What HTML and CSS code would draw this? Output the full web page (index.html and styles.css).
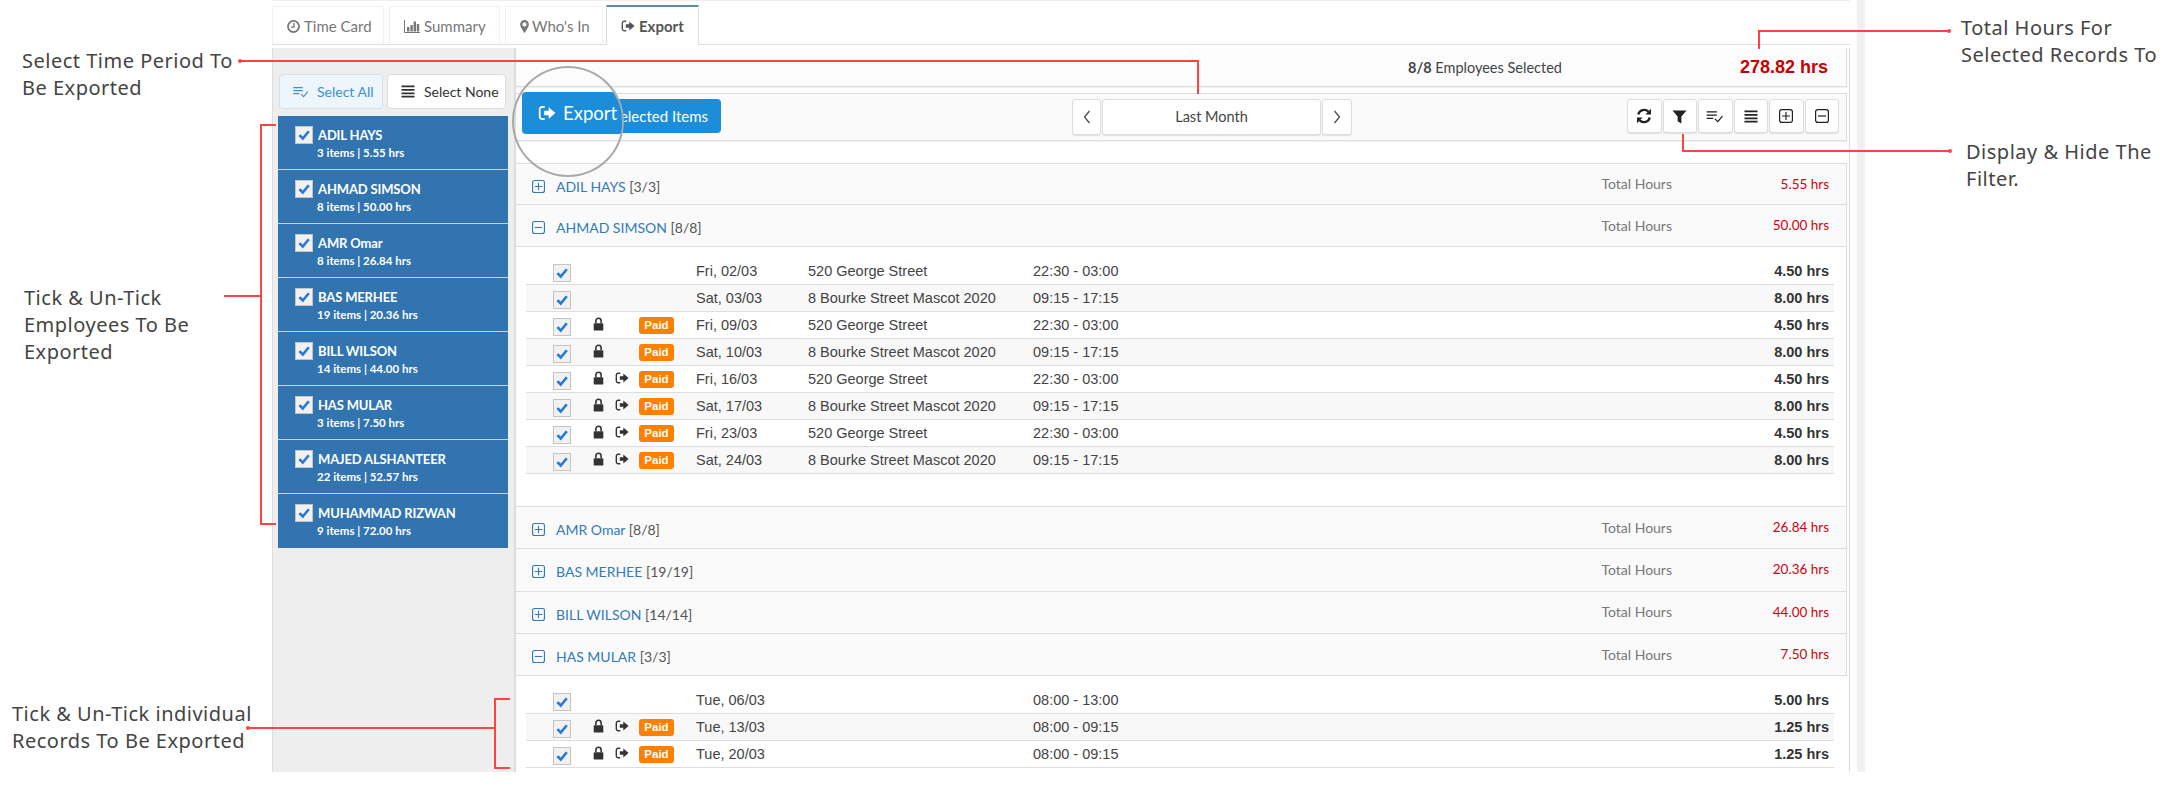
FILE: index.html
```html
<!DOCTYPE html>
<html lang="en">

<head>
    <meta charset="UTF-8">
    <title>Export</title>
    <link rel="stylesheet" href="styles.css">
</head>

<body>

    <svg class="defs" width="0" height="0">
        <symbol id="i-clock" viewBox="0 0 16 16">
            <circle cx="8" cy="8" r="6.8" fill="none" stroke="currentColor" stroke-width="2.200"/>
            <path d="M8.500 3.800v5H5" fill="none" stroke="currentColor" stroke-width="1.700"/>
        </symbol>
        <symbol id="i-chart" viewBox="0 0 16 13" preserveAspectRatio="none">
            <path d="M.5 0v12.500H16" fill="none" stroke="currentColor"/>
            <path d="M3 7h2.400v4.500H3zM6.400 5h2.400v6.500H6.400zM9.600 1.500h2.400v10H9.600zM12.800 4h2.400v7.500h-2.400z" fill="currentColor"/>
        </symbol>
        <symbol id="i-pin" viewBox="2.500 0 11 16">
            <path d="M8 0a5.400 5.400 0 0 0-5.400 5.400C2.600 8.600 8 16 8 16s5.400-7.400 5.400-10.600A5.400 5.400 0 0 0 8 0zm0 8a2.600 2.600 0 1 1 0-5.200A2.600 2.600 0 0 1 8 8z" fill="currentColor"/>
        </symbol>
        <symbol id="i-export" viewBox="0 0 16 16">
            <path d="M6 2.500H3.800A2.300 2.300 0 0 0 1.500 4.800v6.400a2.300 2.300 0 0 0 2.300 2.300H6" fill="none" stroke="currentColor" stroke-width="1.600"/>
            <path d="M5.500 6H9.500V2.800L15.500 8l-6 5.200V10H5.500z" fill="currentColor"/>
        </symbol>
        <symbol id="i-lock" viewBox="0 0 12 16">
            <path d="M3 7V4.500a3 3 0 0 1 6 0V7" fill="none" stroke="currentColor" stroke-width="1.800"/>
            <rect x=".5" y="7" width="11" height="8.500" rx="1" fill="currentColor"/>
        </symbol>
        <symbol id="i-refresh" viewBox="0 0 16 16">
            <path d="M2.300 6.600A6 6 0 0 1 12.400 3.600" fill="none" stroke="currentColor" stroke-width="2.300"/>
            <path d="M15 .8v5.600H9.400z" fill="currentColor"/>
            <path d="M13.700 9.400A6 6 0 0 1 3.600 12.400" fill="none" stroke="currentColor" stroke-width="2.300"/>
            <path d="M1 15.200V9.600h5.600z" fill="currentColor"/>
        </symbol>
        <symbol id="i-filter" viewBox="0 0 16 16">
            <path d="M.5 1.500h15L10 8v7.500L6 13V8z" fill="currentColor"/>
        </symbol>
        <symbol id="i-listcheck" viewBox="0 0 18 14">
            <path d="M0 2h11M0 5.500h11M0 9h7" fill="none" stroke="currentColor" stroke-width="1.500"/>
            <path d="M9 9.500l3 3 5-6" fill="none" stroke="currentColor" stroke-width="1.300"/>
        </symbol>
        <symbol id="i-lines" viewBox="0 0 14 14">
            <path d="M0 1.500h14M0 5.200h14M0 8.900h14M0 12.600h14" fill="none" stroke="currentColor" stroke-width="1.900"/>
        </symbol>
        <symbol id="i-plus" viewBox="0 0 14 14">
            <rect x=".6" y=".6" width="12.800" height="12.800" rx="2.200" fill="none" stroke="currentColor" stroke-width="1.200"/>
            <path d="M7 3v8M3 7h8" fill="none" stroke="currentColor" stroke-width="1.200"/>
        </symbol>
        <symbol id="i-minus" viewBox="0 0 14 14">
            <rect x=".6" y=".6" width="12.800" height="12.800" rx="2.200" fill="none" stroke="currentColor" stroke-width="1.200"/>
            <path d="M3 7h8" fill="none" stroke="currentColor" stroke-width="1.200"/>
        </symbol>
        <symbol id="i-tick" viewBox="0 0 18 18">
            <path d="M3.800 9.200l3.800 3.800 6.800-8.200" fill="none" stroke="currentColor" stroke-width="3"/>
        </symbol>
        <symbol id="i-left" viewBox="0 0 8 14">
            <path d="M6.500 1L1.500 7l5 6" fill="none" stroke="currentColor" stroke-width="1.200"/>
        </symbol>
        <symbol id="i-right" viewBox="0 0 8 14">
            <path d="M1.500 1l5 6-5 6" fill="none" stroke="currentColor" stroke-width="1.200"/>
        </symbol>
    </svg>

    <div class="shell">
        <div class="app">

            <ul class="tabs">
                <li class="tab tab-time"><svg class="ico"><use href="#i-clock"/></svg> Time Card</li>
                <li class="tab tab-summary"><svg class="ico ico-chart"><use href="#i-chart"/></svg> Summary</li>
                <li class="tab tab-who"><svg class="ico ico-pin"><use href="#i-pin"/></svg> Who's In</li>
                <li class="tab tab-export active"><svg class="ico ico-out"><use href="#i-export"/></svg> Export</li>
            </ul>

            <div class="content">

                <div class="side">
                    <div class="side-btns">
                        <button class="btn btn-all"><svg class="ico-list"><use href="#i-listcheck"/></svg> Select All</button>
                        <button class="btn btn-none"><svg class="ico-lines"><use href="#i-lines"/></svg> Select None</button>
                    </div>
                    <div class="emp-list">
                        <div class="emp"><span class="box"><svg><use href="#i-tick"/></svg></span><b class="emp-name">ADIL HAYS</b><span class="emp-sub">3 items | 5.55 hrs</span></div>
                        <div class="emp"><span class="box"><svg><use href="#i-tick"/></svg></span><b class="emp-name">AHMAD SIMSON</b><span class="emp-sub">8 items | 50.00 hrs</span></div>
                        <div class="emp"><span class="box"><svg><use href="#i-tick"/></svg></span><b class="emp-name">AMR Omar</b><span class="emp-sub">8 items | 26.84 hrs</span></div>
                        <div class="emp"><span class="box"><svg><use href="#i-tick"/></svg></span><b class="emp-name">BAS MERHEE</b><span class="emp-sub">19 items | 20.36 hrs</span></div>
                        <div class="emp"><span class="box"><svg><use href="#i-tick"/></svg></span><b class="emp-name">BILL WILSON</b><span class="emp-sub">14 items | 44.00 hrs</span></div>
                        <div class="emp"><span class="box"><svg><use href="#i-tick"/></svg></span><b class="emp-name">HAS MULAR</b><span class="emp-sub">3 items | 7.50 hrs</span></div>
                        <div class="emp"><span class="box"><svg><use href="#i-tick"/></svg></span><b class="emp-name">MAJED ALSHANTEER</b><span class="emp-sub">22 items | 52.57 hrs</span></div>
                        <div class="emp"><span class="box"><svg><use href="#i-tick"/></svg></span><b class="emp-name">MUHAMMAD RIZWAN</b><span class="emp-sub">9 items | 72.00 hrs</span></div>
                    </div>
                </div>

                <div class="main">

                    <div class="summary">
                        <span class="sum-count"><b>8/8</b> Employees Selected</span>
                        <span class="sum-total">278.82 hrs</span>
                    </div>

                    <div class="toolbar">
                        <button class="export-btn">elected Items</button>
                        <div class="pager">
                            <button class="pg pg-prev"><svg><use href="#i-left"/></svg></button>
                            <button class="pg pg-date">Last Month</button>
                            <button class="pg pg-next"><svg><use href="#i-right"/></svg></button>
                        </div>
                        <div class="tools">
                            <button class="tool"><svg class="t-refresh"><use href="#i-refresh"/></svg></button>
                            <button class="tool"><svg class="t-filter"><use href="#i-filter"/></svg></button>
                            <button class="tool"><svg class="t-list"><use href="#i-listcheck"/></svg></button>
                            <button class="tool"><svg class="t-lines"><use href="#i-lines"/></svg></button>
                            <button class="tool"><svg class="t-sq"><use href="#i-plus"/></svg></button>
                            <button class="tool"><svg class="t-sq"><use href="#i-minus"/></svg></button>
                        </div>
                    </div>

                    <div class="groups">
                        <div class="group-head first">
                            <svg class="sq"><use href="#i-plus"/></svg>
                            <span class="g-name"><a>ADIL HAYS</a> [3/3]</span>
                            <span class="g-label">Total Hours</span>
                            <span class="g-hours">5.55 hrs</span>
                        </div>
                        <div class="group-head">
                            <svg class="sq"><use href="#i-minus"/></svg>
                            <span class="g-name"><a>AHMAD SIMSON</a> [8/8]</span>
                            <span class="g-label">Total Hours</span>
                            <span class="g-hours">50.00 hrs</span>
                        </div>
                        <div class="rows rows-ruled">
                            <div class="row"><span class="box"><svg><use href="#i-tick"/></svg></span><span></span><span></span><span></span><span>Fri, 02/03</span><span>520 George Street</span><span>22:30 - 03:00</span><b>4.50 hrs</b></div>
                            <div class="row"><span class="box"><svg><use href="#i-tick"/></svg></span><span></span><span></span><span></span><span>Sat, 03/03</span><span>8 Bourke Street Mascot 2020</span><span>09:15 - 17:15</span><b>8.00 hrs</b></div>
                            <div class="row"><span class="box"><svg><use href="#i-tick"/></svg></span><svg class="lock"><use href="#i-lock"/></svg><span></span><span class="paid">Paid</span><span>Fri, 09/03</span><span>520 George Street</span><span>22:30 - 03:00</span><b>4.50 hrs</b></div>
                            <div class="row"><span class="box"><svg><use href="#i-tick"/></svg></span><svg class="lock"><use href="#i-lock"/></svg><span></span><span class="paid">Paid</span><span>Sat, 10/03</span><span>8 Bourke Street Mascot 2020</span><span>09:15 - 17:15</span><b>8.00 hrs</b></div>
                            <div class="row"><span class="box"><svg><use href="#i-tick"/></svg></span><svg class="lock"><use href="#i-lock"/></svg><svg class="out"><use href="#i-export"/></svg><span class="paid">Paid</span><span>Fri, 16/03</span><span>520 George Street</span><span>22:30 - 03:00</span><b>4.50 hrs</b></div>
                            <div class="row"><span class="box"><svg><use href="#i-tick"/></svg></span><svg class="lock"><use href="#i-lock"/></svg><svg class="out"><use href="#i-export"/></svg><span class="paid">Paid</span><span>Sat, 17/03</span><span>8 Bourke Street Mascot 2020</span><span>09:15 - 17:15</span><b>8.00 hrs</b></div>
                            <div class="row"><span class="box"><svg><use href="#i-tick"/></svg></span><svg class="lock"><use href="#i-lock"/></svg><svg class="out"><use href="#i-export"/></svg><span class="paid">Paid</span><span>Fri, 23/03</span><span>520 George Street</span><span>22:30 - 03:00</span><b>4.50 hrs</b></div>
                            <div class="row"><span class="box"><svg><use href="#i-tick"/></svg></span><svg class="lock"><use href="#i-lock"/></svg><svg class="out"><use href="#i-export"/></svg><span class="paid">Paid</span><span>Sat, 24/03</span><span>8 Bourke Street Mascot 2020</span><span>09:15 - 17:15</span><b>8.00 hrs</b></div>
                        </div>
                        <div class="group-head">
                            <svg class="sq"><use href="#i-plus"/></svg>
                            <span class="g-name"><a>AMR Omar</a> [8/8]</span>
                            <span class="g-label">Total Hours</span>
                            <span class="g-hours">26.84 hrs</span>
                        </div>
                        <div class="group-head">
                            <svg class="sq"><use href="#i-plus"/></svg>
                            <span class="g-name"><a>BAS MERHEE</a> [19/19]</span>
                            <span class="g-label">Total Hours</span>
                            <span class="g-hours">20.36 hrs</span>
                        </div>
                        <div class="group-head">
                            <svg class="sq"><use href="#i-plus"/></svg>
                            <span class="g-name"><a>BILL WILSON</a> [14/14]</span>
                            <span class="g-label">Total Hours</span>
                            <span class="g-hours">44.00 hrs</span>
                        </div>
                        <div class="group-head">
                            <svg class="sq"><use href="#i-minus"/></svg>
                            <span class="g-name"><a>HAS MULAR</a> [3/3]</span>
                            <span class="g-label">Total Hours</span>
                            <span class="g-hours">7.50 hrs</span>
                        </div>
                        <div class="rows">
                            <div class="row"><span class="box"><svg><use href="#i-tick"/></svg></span><span></span><span></span><span></span><span>Tue, 06/03</span><span></span><span>08:00 - 13:00</span><b>5.00 hrs</b></div>
                            <div class="row"><span class="box"><svg><use href="#i-tick"/></svg></span><svg class="lock"><use href="#i-lock"/></svg><svg class="out"><use href="#i-export"/></svg><span class="paid">Paid</span><span>Tue, 13/03</span><span></span><span>08:00 - 09:15</span><b>1.25 hrs</b></div>
                            <div class="row"><span class="box"><svg><use href="#i-tick"/></svg></span><svg class="lock"><use href="#i-lock"/></svg><svg class="out"><use href="#i-export"/></svg><span class="paid">Paid</span><span>Tue, 20/03</span><span></span><span>08:00 - 09:15</span><b>1.25 hrs</b></div>
                        </div>
                    </div>

                </div>
            </div>
        </div>
        <div class="track"></div>
    </div>

    <!-- magnified export button -->
    <div class="lens">
        <div class="lens-btn"><svg class="ico"><use href="#i-export"/></svg> Export</div>
    </div>

    <!-- red callouts -->
    <svg class="callouts" width="2173" height="807">
        <g fill="none" stroke="#ff4343" stroke-width="2">
            <path d="M240 61H1198V94"/>
            <path d="M276 125H261V524H276M224 296H261"/>
            <path d="M248 728H495M510 699H495V768H510"/>
            <path d="M1949 31H1759V49"/>
            <path d="M1950 151H1683V134"/>
        </g>
        <g fill="#ff4343">
            <circle cx="240" cy="61" r="2"/>
            <circle cx="248" cy="728" r="2"/>
            <circle cx="1949" cy="31" r="2"/>
            <circle cx="1950" cy="151" r="2"/>
        </g>
    </svg>

    <div class="note note-period">Select Time Period To<br>Be Exported</div>
    <div class="note note-tick">Tick &amp; Un-Tick<br>Employees To Be<br>Exported</div>
    <div class="note note-records">Tick &amp; Un-Tick individual<br>Records To Be Exported</div>
    <div class="note note-total">Total Hours For<br>Selected Records To</div>
    <div class="note note-filter">Display &amp; Hide The<br>Filter.</div>

</body>

</html>
```

FILE: styles.css
```css
* {
    box-sizing: border-box;
}

body {
    margin: 0;
    width: 2173px;
    height: 807px;
    overflow: hidden;
    position: relative;
    background: white;
    font-family: Lato, "Liberation Sans", sans-serif;
    font-size: 14px;
    color: #333;
}

button {
    font-family: inherit;
    margin: 0;
}

.defs {
    position: absolute;
}

.shell {
    display: flex;
    margin-left: 272px;
    height: 772px;
    overflow: hidden;
}

.app {
    width: 1578px;
    border-top: 1px solid #eee;
    display: flex;
    flex-direction: column;
}

.track {
    width: 8px;
    margin-left: 7px;
    background: #f1f1f1;
}

/* tabs */

.tabs {
    display: flex;
    height: 44px;
    margin: 0;
    padding: 5px 0 0 0;
    list-style: none;
    border-bottom: 1px solid #ddd;
    flex-shrink: 0;
}

.tab {
    display: flex;
    align-items: center;
    gap: 4px;
    height: 39px;
    padding-left: 14px;
    font-size: 15px;
    color: #777;
    border: 1px solid #f0f0f0;
    border-bottom: none;
}

.tab .ico {
    width: 13px;
    height: 13px;
}

.tab .ico-chart {
    width: 16px;
}

.tab .ico-pin {
    width: 9px;
    margin-right: -1px;
}

.tab .ico-out {
    width: 14px;
    height: 14px;
}

.tab-time {
    width: 112px;
    margin-right: 5px;
}

.tab-summary {
    width: 111px;
    margin-right: 5px;
}

.tab-who {
    width: 98px;
    margin-right: 3px;
}

.tab-export {
    width: 93px;
    height: 40px;
    margin-top: -1px;
    background: white;
    color: #555;
    font-weight: bold;
    border: 1px solid #ddd;
    border-top: 2px solid #5b8ea8;
    border-bottom: none;
}

.content {
    display: flex;
    flex: 1;
    min-height: 0;
    padding-top: 3px;
}

/* left list */

.side {
    width: 242px;
    background: #eee;
    border-left: 1px solid #ddd;
    padding-top: 26px;
    flex-shrink: 0;
}

.side-btns {
    display: flex;
    gap: 4px;
    margin-left: 6px;
}

.btn {
    display: flex;
    align-items: center;
    height: 35px;
    font-size: 14px;
    border-radius: 4px;
    padding: 0;
}

.btn-all {
    width: 104px;
    padding-left: 12px;
    gap: 7px;
    background: #eef6fc;
    color: #3b8fd8;
    border: 1px solid #d3e1ec;
}

.btn-none {
    width: 119px;
    padding-left: 13px;
    gap: 9px;
    background: white;
    color: #333;
    border: 1px solid #ddd;
}

.ico-list {
    width: 18px;
    height: 12px;
}

.ico-lines {
    width: 14px;
    height: 13px;
}

.emp-list {
    width: 230px;
    margin: 7px 0 0 5px;
}

.emp {
    display: grid;
    grid-template-columns: 18px auto;
    column-gap: 5px;
    grid-auto-rows: 18px;
    height: 54px;
    padding: 10px 0 0 17px;
    background: #3174b0;
    color: white;
    border-bottom: 1px solid #c4d3e0;
}

.emp:last-child {
    border-bottom: none;
}

.emp-name {
    font-size: 13px;
    line-height: 18px;
    letter-spacing: -0.15px;
}

.emp-sub {
    grid-column: 2;
    margin-left: -1px;
    font-size: 11.5px;
    font-weight: bold;
    line-height: 18px;
}

.box {
    display: block;
    width: 18px;
    height: 18px;
    background: #f1f1f1;
    border: 1px solid #c4c4c4;
    color: #2a7ad5;
}

.box svg {
    display: block;
    width: 16px;
    height: 16px;
}

/* right part */

.main {
    width: 1336px;
    border-left: 2px solid #ddd;
    border-right: 1px solid #ddd;
    padding-right: 2px;
    flex-shrink: 0;
}

.summary {
    display: flex;
    align-items: center;
    height: 39px;
    padding-right: 18px;
    background: #fcfcfc;
    border-bottom: 1px solid #ddd;
    border-right: 1px solid #ddd;
    box-shadow: 0 1px 1px rgba(0, 0, 0, 0.05);
}

.sum-count {
    margin-left: 892px;
    font-size: 14.5px;
    color: #444;
}

.sum-total {
    margin-left: auto;
    font-family: "Liberation Sans", sans-serif;
    font-size: 18px;
    font-weight: bold;
    color: #c80000;
}

.toolbar {
    display: flex;
    align-items: flex-start;
    height: 48px;
    margin-top: 6px;
    padding: 5px 7px 0 7px;
    background: #fafafa;
    border-top: 1px solid #ddd;
    border-bottom: 1px solid #ddd;
    border-right: 1px solid #ddd;
    box-shadow: 0 1px 1px rgba(0, 0, 0, 0.05);
}

.export-btn {
    display: flex;
    align-items: center;
    justify-content: flex-end;
    width: 198px;
    height: 34px;
    padding: 0 13px 0 0;
    background: #1b8dd9;
    color: white;
    border: none;
    border-radius: 4px;
    font-size: 15px;
}

.pager {
    display: flex;
    gap: 1px;
    margin-left: 351px;
}

.pg {
    height: 36px;
    padding: 0;
    background: white;
    border: 1px solid #ddd;
    border-radius: 3px;
    font-size: 14px;
    color: #444;
    box-shadow: 0 1px 1px rgba(0, 0, 0, 0.1);
}

.pg svg {
    display: block;
    width: 8px;
    height: 14px;
    margin: auto;
}

.pg-prev {
    width: 29px;
}

.pg-date {
    width: 219px;
    padding-bottom: 2px;
    font-size: 14.5px;
}

.pg-next {
    width: 30px;
}

.tools {
    display: flex;
    gap: 1px;
    margin-left: auto;
}

.tool {
    display: flex;
    align-items: center;
    justify-content: center;
    width: 34.5px;
    height: 34px;
    padding: 0;
    background: white;
    color: #222;
    border: 1px solid #ddd;
    border-radius: 3px;
    box-shadow: 0 1px 1px rgba(0, 0, 0, 0.1);
}

.t-refresh {
    width: 16px;
    height: 16px;
}

.t-filter {
    width: 15px;
    height: 15px;
}

.t-list {
    width: 18px;
    height: 13px;
}

.t-lines {
    width: 14px;
    height: 13px;
}

.t-sq {
    width: 14px;
    height: 14px;
}

/* groups */

.groups {
    margin-top: 22px;
}

.group-head {
    display: flex;
    align-items: center;
    height: 42.33px;
    padding: 0 17px 0 16px;
    background: #fafafa;
    border-bottom: 1px solid #ddd;
    border-right: 1px solid #ddd;
}

.group-head.first {
    height: 42px;
    border-top: 1px solid #ddd;
}

.group-head:nth-child(2) {
    height: 42px;
}

.sq {
    width: 13px;
    height: 13px;
    margin-top: 4px;
    color: #337ab7;
    flex-shrink: 0;
}

.g-name {
    margin: 4px 0 0 11px;
    font-size: 14px;
    color: #555;
}

.g-name a {
    color: #337ab7;
}

.g-label {
    margin: -1px 0 0 auto;
    font-size: 14px;
    color: #777;
}

.g-hours {
    width: 157px;
    margin-top: -1px;
    text-align: right;
    font-size: 13.5px;
    color: #d4000f;
}

.rows {
    padding: 11px 13px 0 10px;
}

.rows-ruled {
    padding-bottom: 32px;
    border-bottom: 1px solid #ddd;
    border-right: 1px solid #ddd;
    padding-right: 12px;
}

.row {
    display: grid;
    grid-template-columns: 40px 21.5px 24.5px 57px 112px 225px 1fr auto;
    align-items: center;
    height: 27px;
    padding: 0 5px 0 27px;
    font-family: "Liberation Sans", sans-serif;
    font-size: 14.5px;
    color: #444;
    border-bottom: 1px solid #ddd;
}

.row:nth-child(even) {
    background: #f8f8f8;
}

.row .box {
    margin-top: 3px;
}

.row b {
    color: #333;
}

.lock {
    width: 11px;
    height: 14px;
    color: #333;
    margin-top: -3px;
}

.out {
    width: 14px;
    height: 14px;
    color: #333;
    margin-top: -3px;
}

.paid {
    display: block;
    width: 35px;
    height: 17px;
    margin-top: 1px;
    background: #ff7f00;
    color: white;
    border-radius: 3px;
    font-size: 11.5px;
    font-weight: bold;
    line-height: 17px;
    text-align: center;
}

/* lens over the export button */

.lens {
    position: absolute;
    left: 512px;
    top: 66px;
    width: 112px;
    height: 111px;
    border: 2.5px solid #a9a9a9;
    border-radius: 50%;
    overflow: hidden;
}

.lens-btn {
    position: absolute;
    left: 8px;
    top: 24px;
    width: 130px;
    height: 42px;
    display: flex;
    align-items: center;
    gap: 7px;
    padding-left: 16px;
    background: #1b8dd9;
    color: white;
    border-radius: 4px;
    font-size: 18.5px;
}

.lens-btn .ico {
    width: 18px;
    height: 18px;
}

/* callouts */

.callouts {
    position: absolute;
    left: 0;
    top: 0;
}

.note {
    position: absolute;
    font-family: "Noto Sans", sans-serif;
    font-size: 20px;
    line-height: 27px;
    letter-spacing: 0.5px;
    color: #444;
    white-space: nowrap;
}

.note-period {
    left: 22px;
    top: 47px;
}

.note-tick {
    left: 24px;
    top: 284px;
}

.note-records {
    left: 12px;
    top: 700px;
}

.note-total {
    left: 1961px;
    top: 14px;
}

.note-filter {
    left: 1966px;
    top: 138px;
}
```
